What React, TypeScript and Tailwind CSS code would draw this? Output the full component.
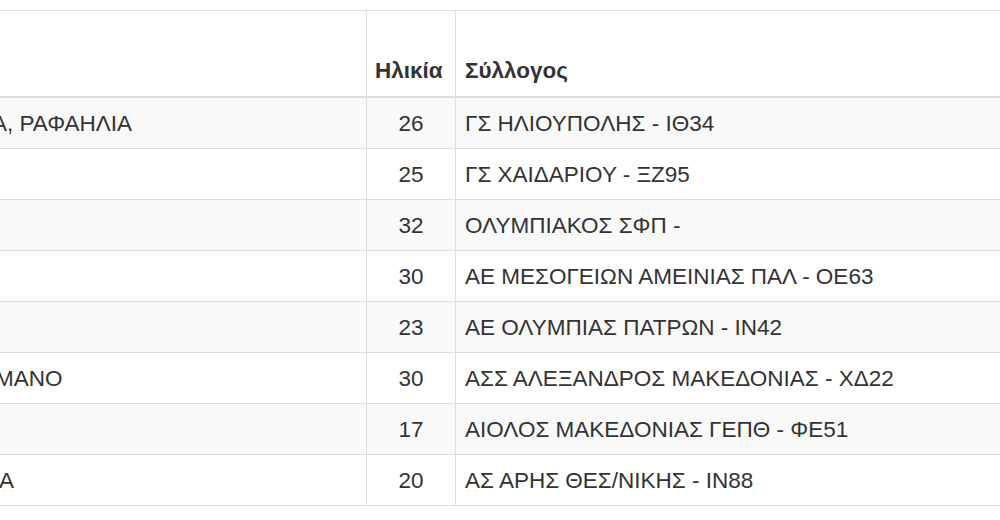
const rows = [
  { name: 'Α, ΡΑΦΑΗΛΙΑ', shift: '-ml-[16px]', age: 26, club: 'ΓΣ ΗΛΙΟΥΠΟΛΗΣ - ΙΘ34' },
  { name: '', shift: '', age: 25, club: 'ΓΣ ΧΑΙΔΑΡΙΟΥ - ΞΖ95' },
  { name: '', shift: '', age: 32, club: 'ΟΛΥΜΠΙΑΚΟΣ ΣΦΠ -' },
  { name: '', shift: '', age: 30, club: 'ΑΕ ΜΕΣΟΓΕΙΩΝ ΑΜΕΙΝΙΑΣ ΠΑΛ - ΟΕ63' },
  { name: '', shift: '', age: 23, club: 'ΑΕ ΟΛΥΜΠΙΑΣ ΠΑΤΡΩΝ - ΙΝ42' },
  { name: 'ΜΑΝΟ', shift: '-ml-[13px]', age: 30, club: 'ΑΣΣ ΑΛΕΞΑΝΔΡΟΣ ΜΑΚΕΔΟΝΙΑΣ - ΧΔ22' },
  { name: '', shift: '', age: 17, club: 'ΑΙΟΛΟΣ ΜΑΚΕΔΟΝΙΑΣ ΓΕΠΘ - ΦΕ51' },
  { name: 'Α', shift: '-ml-[9px]', age: 20, club: 'ΑΣ ΑΡΗΣ ΘΕΣ/ΝΙΚΗΣ - ΙΝ88' },
];

export default function App() {
  return (
    <div
      className="min-h-screen bg-white pt-[10px] text-[#333] overflow-hidden"
      style={{ fontFamily: '"Liberation Sans", Arial, sans-serif' }}
    >
      <table className="w-full table-fixed border-separate border-spacing-0 text-[22.5px] leading-[30px]">
        <colgroup>
          <col className="w-[367px]" />
          <col className="w-[89px]" />
          <col />
        </colgroup>
        <thead>
          <tr>
            <th className="h-[88px] border-t border-b-2 border-r border-[#ddd] px-[9px] pb-[10px] align-bottom text-left font-bold"></th>
            <th className="border-t border-b-2 border-r border-[#ddd] px-[8px] pb-[10px] align-bottom text-left font-bold">
              Ηλικία
            </th>
            <th className="border-t border-b-2 border-[#ddd] px-[9px] pb-[10px] align-bottom text-left font-bold">
              Σύλλογος
            </th>
          </tr>
        </thead>
        <tbody>
          {rows.map((r, i) => (
            <tr key={i} className={i % 2 === 0 ? 'bg-[#f9f9f9]' : 'bg-white'}>
              <td className="h-[51px] border-b border-r border-[#ddd] px-[8px] pt-[11px] pb-[9px] whitespace-nowrap overflow-hidden">
                {r.name && <span className={`inline-block ${r.shift}`}>{r.name}</span>}
              </td>
              <td className="border-b border-r border-[#ddd] px-[8px] pt-[11px] pb-[9px] text-center">{r.age}</td>
              <td className="border-b border-[#ddd] px-[9px] pt-[11px] pb-[9px] whitespace-nowrap">{r.club}</td>
            </tr>
          ))}
        </tbody>
      </table>
    </div>
  );
}
